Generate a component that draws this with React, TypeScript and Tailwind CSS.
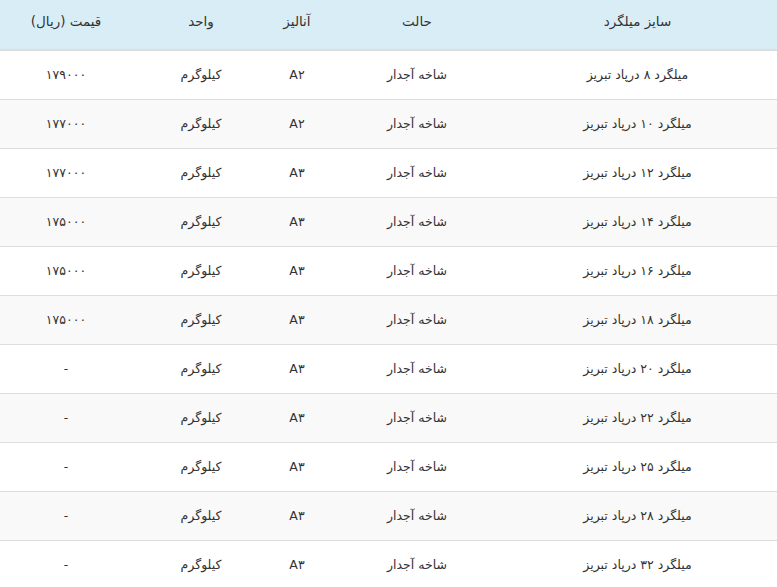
import React from "react";

const rows = [
  ["۸", "A۲", "۱۷۹۰۰۰"],
  ["۱۰", "A۲", "۱۷۷۰۰۰"],
  ["۱۲", "A۳", "۱۷۷۰۰۰"],
  ["۱۴", "A۳", "۱۷۵۰۰۰"],
  ["۱۶", "A۳", "۱۷۵۰۰۰"],
  ["۱۸", "A۳", "۱۷۵۰۰۰"],
  ["۲۰", "A۳", "-"],
  ["۲۲", "A۳", "-"],
  ["۲۵", "A۳", "-"],
  ["۲۸", "A۳", "-"],
  ["۳۲", "A۳", "-"],
];

const cols = "grid grid-cols-[267px_186px_54px_138px_132px]";

export default function App() {
  return (
    <div
      dir="rtl"
      className="w-[777px] h-[587px] overflow-hidden bg-white text-[#333] text-[12.5px]"
      style={{ fontFamily: '"DejaVu Sans", "Noto Sans", sans-serif' }}
    >
      <div className={`${cols} h-[51px] items-center pb-[6px] bg-[#d9edf7] border-b-2 border-[#dddddd] text-[13.5px]`}>
        <div className="text-center pr-[12px]">سایز میلگرد</div>
        <div className="text-center">حالت</div>
        <div className="text-center">آنالیز</div>
        <div className="text-center">واحد</div>
        <div className="text-center">قیمت (ریال)</div>
      </div>
      {rows.map((r, i) => (
        <div
          key={i}
          className={`${cols} h-[49px] items-center border-b border-[#dddddd] ${i % 2 === 1 ? "bg-[#f9f9f9]" : "bg-white"}`}
        >
          <div className="text-center pr-[12px]">میلگرد {r[0]} درپاد تبریز</div>
          <div className="text-center">شاخه آجدار</div>
          <div className="text-center">{r[1]}</div>
          <div className="text-center">کیلوگرم</div>
          <div className="text-center">{r[2]}</div>
        </div>
      ))}
    </div>
  );
}
